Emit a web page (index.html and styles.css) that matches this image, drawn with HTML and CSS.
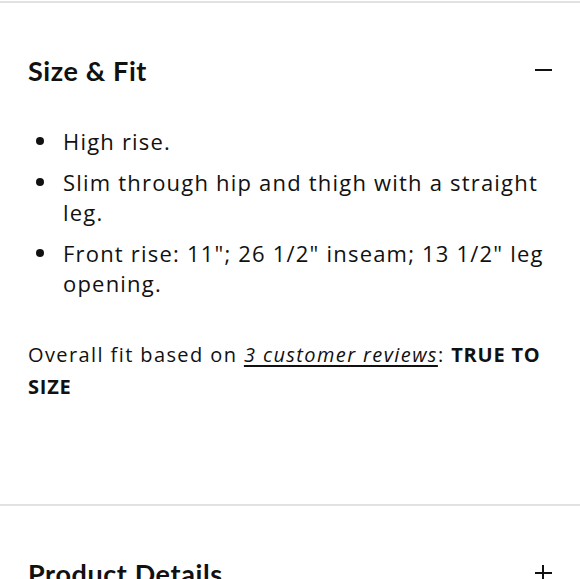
FILE: index.html
```html
<!DOCTYPE html>
<html lang="en">
<head>
<meta charset="utf-8">
<link rel="stylesheet" href="styles.css">
</head>
<body>
<section class="acc acc-open">
  <div class="acc-head">
    <h2 class="acc-title">Size &amp; Fit</h2>
    <span class="icon icon-minus"></span>
  </div>
  <div class="acc-body">
    <ul class="fit-list">
      <li>High rise.</li>
      <li>Slim through hip and thigh with a straight leg.</li>
      <li>Front rise: 11"; 26 1/2" inseam; 13 1/2" leg opening.</li>
    </ul>
    <p class="overall">Overall fit based on <a class="reviews" href="#">3 customer reviews</a>: <strong>TRUE TO SIZE</strong></p>
  </div>
</section>
<section class="acc">
  <div class="acc-head">
    <h2 class="acc-title">Product Details</h2>
    <span class="icon icon-plus"></span>
  </div>
</section>
</body>
</html>
```
FILE: styles.css
```css
html, body {
  margin: 0;
  padding: 0;
  background: #fff;
}
body {
  font-family: "Open Sans", Lato, sans-serif;
  color: #111;
  padding-top: 1px;
}
.acc {
  border-top: 2px solid #e2e2e2;
  padding: 0 28px;
}
.acc-head {
  display: flex;
  justify-content: space-between;
  align-items: center;
  height: 135px;
}
.acc-title {
  margin: 0;
  font-family: Lato, "Open Sans", sans-serif;
  font-size: 27px;
  font-weight: 700;
  letter-spacing: 0.6px;
  padding-bottom: 1px;
}
.icon {
  position: relative;
  width: 17px;
  height: 17px;
}
.icon::before, .icon::after {
  content: "";
  position: absolute;
  background: #111;
}
.icon::before {
  left: 0;
  right: 0;
  top: 7px;
  height: 2px;
}
.icon-plus::after {
  top: 0;
  bottom: 0;
  left: 7px;
  width: 2px;
}
.acc-body {
  margin-top: -12px;
  padding-bottom: 101px;
}
.fit-list {
  margin: 0;
  padding: 0;
  list-style: none;
  font-size: 22px;
  line-height: 30px;
  letter-spacing: 1.2px;
}
.fit-list li {
  position: relative;
  padding-left: 35px;
  margin-bottom: 11px;
}
.fit-list li:last-child {
  margin-bottom: 0;
}
.fit-list li::before {
  content: "";
  position: absolute;
  left: 8px;
  top: 11px;
  width: 8px;
  height: 8px;
  border-radius: 50%;
  background: #111;
}
.overall {
  margin: 41px 0 0;
  font-size: 20px;
  line-height: 32px;
  letter-spacing: 1.4px;
}
.overall strong {
  letter-spacing: 0.8px;
}
.reviews {
  color: inherit;
  font-style: italic;
  text-underline-offset: 3px;
}
```
